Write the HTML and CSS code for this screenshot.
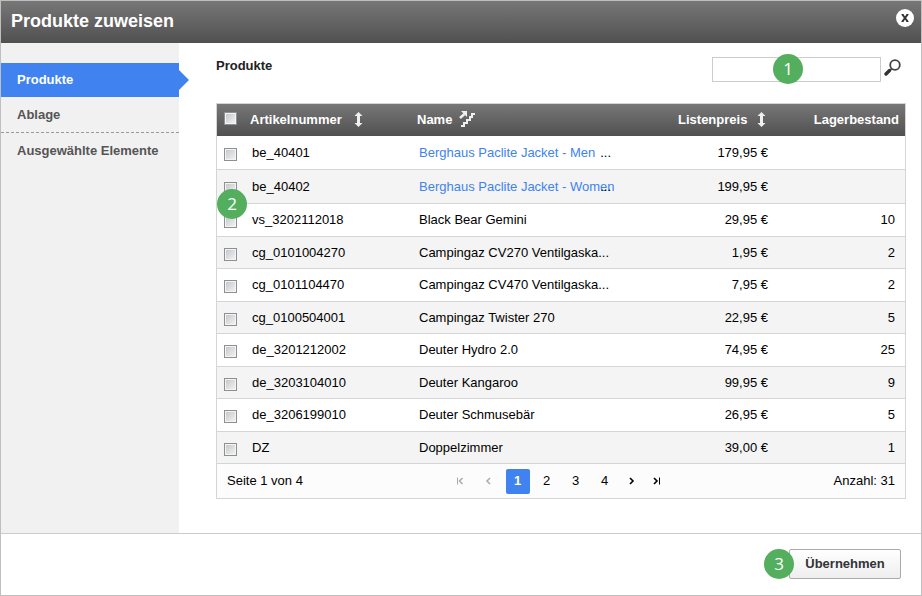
FILE: index.html
```html
<!DOCTYPE html>
<html lang="de">
<head>
    <meta charset="UTF-8">
    <meta name="viewport" content="width=device-width, initial-scale=1.0">
    <title>Produkte zuweisen</title>
    <link rel="stylesheet" href="styles.css">
</head>
<body>
    <div class="dialog">
        <header class="dialog-header">
            <h1>Produkte zuweisen</h1>
            <button type="button" class="close-button" aria-label="Schließen">
                <svg width="18" height="18" viewBox="0 0 18 18">
                    <circle cx="9" cy="9" r="9" fill="#fff"/>
                    <path d="M6.4 5.5 L11.6 12.5 M11.6 5.5 L6.4 12.5" stroke="#333" stroke-width="2"/>
                    <path d="M5.5 5.5h2M10.5 5.5h2M5.5 12.5h2M10.5 12.5h2" stroke="#333" stroke-width="1"/>
                </svg>
            </button>
        </header>

        <div class="dialog-body">
            <nav class="sidebar">
                <a href="#produkte" class="active">Produkte</a>
                <a href="#ablage">Ablage</a>
                <a href="#elemente">Ausgewählte Elemente</a>
            </nav>

            <main class="content">
                <div class="toolbar">
                    <h2>Produkte</h2>
                    <form class="search">
                        <input type="text" class="search-field" aria-label="Suche">
                        <button type="submit" class="search-button" aria-label="Suchen">
                            <svg width="18" height="18" viewBox="0 0 18 18" fill="none">
                                <circle cx="11" cy="6" r="4.8" stroke="#444" stroke-width="1.8"/>
                                <path d="M7.6 9.6 L6 11.2" stroke="#444" stroke-width="1.6"/>
                                <path d="M5.5 11.5 L2 15" stroke="#333" stroke-width="3.4" stroke-linecap="round"/>
                            </svg>
                        </button>
                        <span class="badge badge-search">1</span>
                    </form>
                </div>

                <div class="grid">
                    <span class="badge badge-select">2</span>
                    <table>
                        <thead>
                            <tr>
                                <th class="col-check"><input type="checkbox" aria-label="Alle auswählen"></th>
                                <th class="col-number">Artikelnummer
                                    <svg class="sort" width="9" height="15" viewBox="0 0 9 15" fill="#f0f0f0"><path d="M4.5 0 L8.5 4 H6 V11 H8.5 L4.5 15 L0.5 11 H3 V4 H0.5 Z"/></svg>
                                </th>
                                <th class="col-name">Name
                                    <svg class="steps" width="17" height="16" viewBox="0 0 17 16" fill="none" stroke="#f0f0f0"><path d="M2 15 H5 V12 H8 V9 H11 V6 H13 V3 H16" stroke-width="2"/><path d="M1 7 L5.5 3" stroke-width="2.4"/><path d="M2 0 H8 V6 Z" fill="#f0f0f0" stroke="none"/></svg>
                                </th>
                                <th class="col-price">Listenpreis
                                    <svg class="sort" width="9" height="15" viewBox="0 0 9 15" fill="#f0f0f0"><path d="M4.5 0 L8.5 4 H6 V11 H8.5 L4.5 15 L0.5 11 H3 V4 H0.5 Z"/></svg>
                                </th>
                                <th class="col-stock">Lagerbestand</th>
                            </tr>
                        </thead>
                        <tbody>
                            <tr class="variant">
                                <td><input type="checkbox" aria-label="be_40401"></td>
                                <td>be_40401</td>
                                <td><div class="name"><a href="#be_40401">Berghaus Paclite Jacket - Men</a><span class="more">...</span></div></td>
                                <td class="price">179,95 €</td>
                                <td class="stock"></td>
                            </tr>
                            <tr class="variant">
                                <td><input type="checkbox" aria-label="be_40402"></td>
                                <td>be_40402</td>
                                <td><div class="name"><a href="#be_40402">Berghaus Paclite Jacket - Women</a><span class="more">...</span></div></td>
                                <td class="price">199,95 €</td>
                                <td class="stock"></td>
                            </tr>
                            <tr>
                                <td><input type="checkbox" aria-label="vs_3202112018"></td>
                                <td>vs_3202112018</td>
                                <td>Black Bear Gemini</td>
                                <td class="price">29,95 €</td>
                                <td class="stock">10</td>
                            </tr>
                            <tr>
                                <td><input type="checkbox" aria-label="cg_0101004270"></td>
                                <td>cg_0101004270</td>
                                <td>Campingaz CV270 Ventilgaska...</td>
                                <td class="price">1,95 €</td>
                                <td class="stock">2</td>
                            </tr>
                            <tr>
                                <td><input type="checkbox" aria-label="cg_0101104470"></td>
                                <td>cg_0101104470</td>
                                <td>Campingaz CV470 Ventilgaska...</td>
                                <td class="price">7,95 €</td>
                                <td class="stock">2</td>
                            </tr>
                            <tr>
                                <td><input type="checkbox" aria-label="cg_0100504001"></td>
                                <td>cg_0100504001</td>
                                <td>Campingaz Twister 270</td>
                                <td class="price">22,95 €</td>
                                <td class="stock">5</td>
                            </tr>
                            <tr>
                                <td><input type="checkbox" aria-label="de_3201212002"></td>
                                <td>de_3201212002</td>
                                <td>Deuter Hydro 2.0</td>
                                <td class="price">74,95 €</td>
                                <td class="stock">25</td>
                            </tr>
                            <tr>
                                <td><input type="checkbox" aria-label="de_3203104010"></td>
                                <td>de_3203104010</td>
                                <td>Deuter Kangaroo</td>
                                <td class="price">99,95 €</td>
                                <td class="stock">9</td>
                            </tr>
                            <tr>
                                <td><input type="checkbox" aria-label="de_3206199010"></td>
                                <td>de_3206199010</td>
                                <td>Deuter Schmusebär</td>
                                <td class="price">26,95 €</td>
                                <td class="stock">5</td>
                            </tr>
                            <tr>
                                <td><input type="checkbox" aria-label="DZ"></td>
                                <td>DZ</td>
                                <td>Doppelzimmer</td>
                                <td class="price">39,00 €</td>
                                <td class="stock">1</td>
                            </tr>
                        </tbody>
                    </table>

                    <div class="grid-footer">
                        <span>Seite 1 von 4</span>
                        <div class="pagination">
                            <button type="button" disabled aria-label="Erste Seite">
                                <svg width="8" height="8" viewBox="0 0 8 8" fill="none" stroke="#aaa"><path d="M1.5 0.5 V7.5"/><path d="M6.5 1 L3.5 4 L6.5 7" stroke-width="1.5"/></svg>
                            </button>
                            <button type="button" disabled aria-label="Vorherige Seite">
                                <svg width="8" height="8" viewBox="0 0 8 8" fill="none" stroke="#aaa"><path d="M5 1 L2 4 L5 7" stroke-width="1.5"/></svg>
                            </button>
                            <button type="button" class="current">1</button>
                            <button type="button">2</button>
                            <button type="button">3</button>
                            <button type="button">4</button>
                            <button type="button" class="step" aria-label="Nächste Seite">
                                <svg width="8" height="8" viewBox="0 0 8 8" fill="none" stroke="#000"><path d="M2 1 L5 4 L2 7" stroke-width="1.6"/></svg>
                            </button>
                            <button type="button" class="step" aria-label="Letzte Seite">
                                <svg width="8" height="8" viewBox="0 0 8 8" fill="none" stroke="#000"><path d="M1 1 L4 4 L1 7" stroke-width="1.6"/><path d="M6.5 0.5 V7.5"/></svg>
                            </button>
                        </div>
                        <span class="total">Anzahl: 31</span>
                    </div>
                </div>
            </main>
        </div>

        <footer class="dialog-footer">
            <div class="apply">
                <button type="button" class="apply-button">Übernehmen</button>
                <span class="badge badge-apply">3</span>
            </div>
        </footer>
    </div>
</body>
</html>
```

FILE: styles.css
```css
* {
    box-sizing: border-box;
}

body {
    margin: 0;
    font-family: "Liberation Sans", Arial, sans-serif;
    font-size: 13px;
    line-height: 16px;
    color: #000;
}

button {
    padding: 0;
    border: none;
    background: none;
    font: inherit;
    cursor: pointer;
}

svg {
    display: block;
}

.dialog {
    display: flex;
    flex-direction: column;
    min-height: 100vh;
    border: 1px solid #bfbfbf;
    background-color: white;
}

/* Title bar */
.dialog-header {
    display: flex;
    justify-content: space-between;
    align-items: flex-start;
    height: 42px;
    padding: 8px 7px 0 10px;
    background: linear-gradient(#777, #505050);
}

.dialog-header h1 {
    margin: 0;
    font-size: 18px;
    line-height: 24px;
    color: white;
}

.dialog-body {
    display: flex;
    flex: 1;
}

/* Sidebar */
.sidebar {
    flex: 0 0 178px;
    padding-top: 20px;
    background-color: #f1f1f1;
}

.sidebar a {
    display: block;
    padding: 10px 16px 9px;
    border-bottom: 1px dashed #999;
    font-weight: bold;
    color: #555;
    text-decoration: none;
}

.sidebar a:last-child {
    border-bottom: none;
}

.sidebar .active {
    position: relative;
    padding: 9px 16px;
    border-bottom: none;
    background-color: #4083f0;
    color: white;
}

.sidebar .active::after {
    content: "";
    position: absolute;
    top: 7px;
    left: 100%;
    border: 10px solid transparent;
    border-left-color: #4083f0;
    border-right: none;
}

/* Content */
.content {
    flex: 1;
    padding: 14px 15px 34px 37px;
}

.toolbar {
    display: flex;
    justify-content: space-between;
    margin-bottom: 21px;
}

.toolbar h2 {
    margin: 0;
    font-size: 13px;
    line-height: 18px;
    color: #222;
}

.search {
    position: relative;
    display: flex;
    gap: 3px;
    margin-right: 4px;
}

.search-field {
    width: 169px;
    height: 25px;
    padding: 0 4px;
    border: 1px solid #ccc;
    font: inherit;
}

.search-button {
    height: 22px;
}

.grid {
    position: relative;
    border: 1px solid #d5d5d5;
}

table {
    width: 100%;
    border-spacing: 0;
    table-layout: fixed;
}

th {
    height: 32px;
    padding: 0;
    color: white;
    text-align: left;
    white-space: nowrap;
}

thead tr {
    background: linear-gradient(#777, #505050);
}

.col-check {
    width: 33px;
}

.col-number {
    width: 167px;
}

.col-name {
    width: 212px;
}

.col-price,
.col-stock {
    text-align: right;
}

.col-price {
    width: 139px;
    padding-right: 2px;
}

.col-stock {
    padding-right: 6px;
}

.sort,
.steps {
    display: inline-block;
    margin: -3px 0 0 3px;
    vertical-align: middle;
}

.sort {
    margin-left: 6px;
}

.col-number .sort {
    margin-left: 9px;
}

td {
    height: 33px;
    padding: 0 0 0 2px;
    border-bottom: 1px solid #d5d5d5;
}

tbody tr:nth-child(even) {
    background-color: #f4f4f4;
}

tbody tr:nth-child(even) td {
    height: 32px;
}

tbody .variant td,
tbody .variant:nth-child(even) td {
    height: 34px;
}

th:first-child,
td:first-child {
    padding: 0 0 0 7px;
}

th:first-child {
    padding-bottom: 3px;
}

td:first-child {
    padding-top: 3px;
}

td a {
    color: #4083f0;
    text-decoration: none;
}

.name {
    position: relative;
    width: 192px;
    white-space: nowrap;
}

/* the ellipsis stays at the column end, also over a long name */
.more {
    position: absolute;
    right: 0;
}

.price {
    text-align: right;
}

.stock {
    padding-right: 10px;
    text-align: right;
}

input[type="checkbox"] {
    appearance: none;
    display: block;
    width: 13px;
    height: 13px;
    margin: 0;
    border: 1px solid #8e8f8f;
    background: linear-gradient(135deg, #c0c3c8, #f6f6f6);
    box-shadow: inset 0 0 0 1px #f4f4f4;
}

.grid-footer {
    display: grid;
    grid-template-columns: 1fr auto 1fr;
    align-items: center;
    height: 34px;
    padding: 0 10px;
    background-color: #fcfcfc;
}

.total {
    text-align: right;
}

.pagination {
    display: flex;
    gap: 5px;
    padding-right: 8px;
}

.pagination button {
    display: flex;
    justify-content: center;
    align-items: center;
    width: 24px;
    height: 25px;
    color: #000;
}

.pagination .step {
    width: 20px;
}

.pagination .current {
    border-radius: 2px;
    background-color: #4083f0;
    font-weight: bold;
    color: white;
}

/* Footer */
.dialog-footer {
    display: flex;
    justify-content: flex-end;
    padding: 15px 20px 16px;
    border-top: 1px solid #ccc;
}

.apply {
    position: relative;
}

.apply-button {
    display: block;
    width: 112px;
    height: 30px;
    border: 1px solid #aaa;
    border-radius: 2px;
    background: linear-gradient(#fff, #eee);
    font-weight: bold;
    color: #333;
}

/* Numbered markers */
.badge {
    position: absolute;
    width: 30px;
    height: 30px;
    border-radius: 50%;
    background-color: #53ae5e;
    font-family: "Open Sans", "Noto Sans", sans-serif;
    font-size: 17px;
    line-height: 30px;
    color: white;
    text-align: center;
}

.badge-search {
    top: -3px;
    left: 61px;
}

.badge-select {
    top: 85px;
    left: 0;
}

.badge-apply {
    top: 0;
    left: -25px;
}
```
